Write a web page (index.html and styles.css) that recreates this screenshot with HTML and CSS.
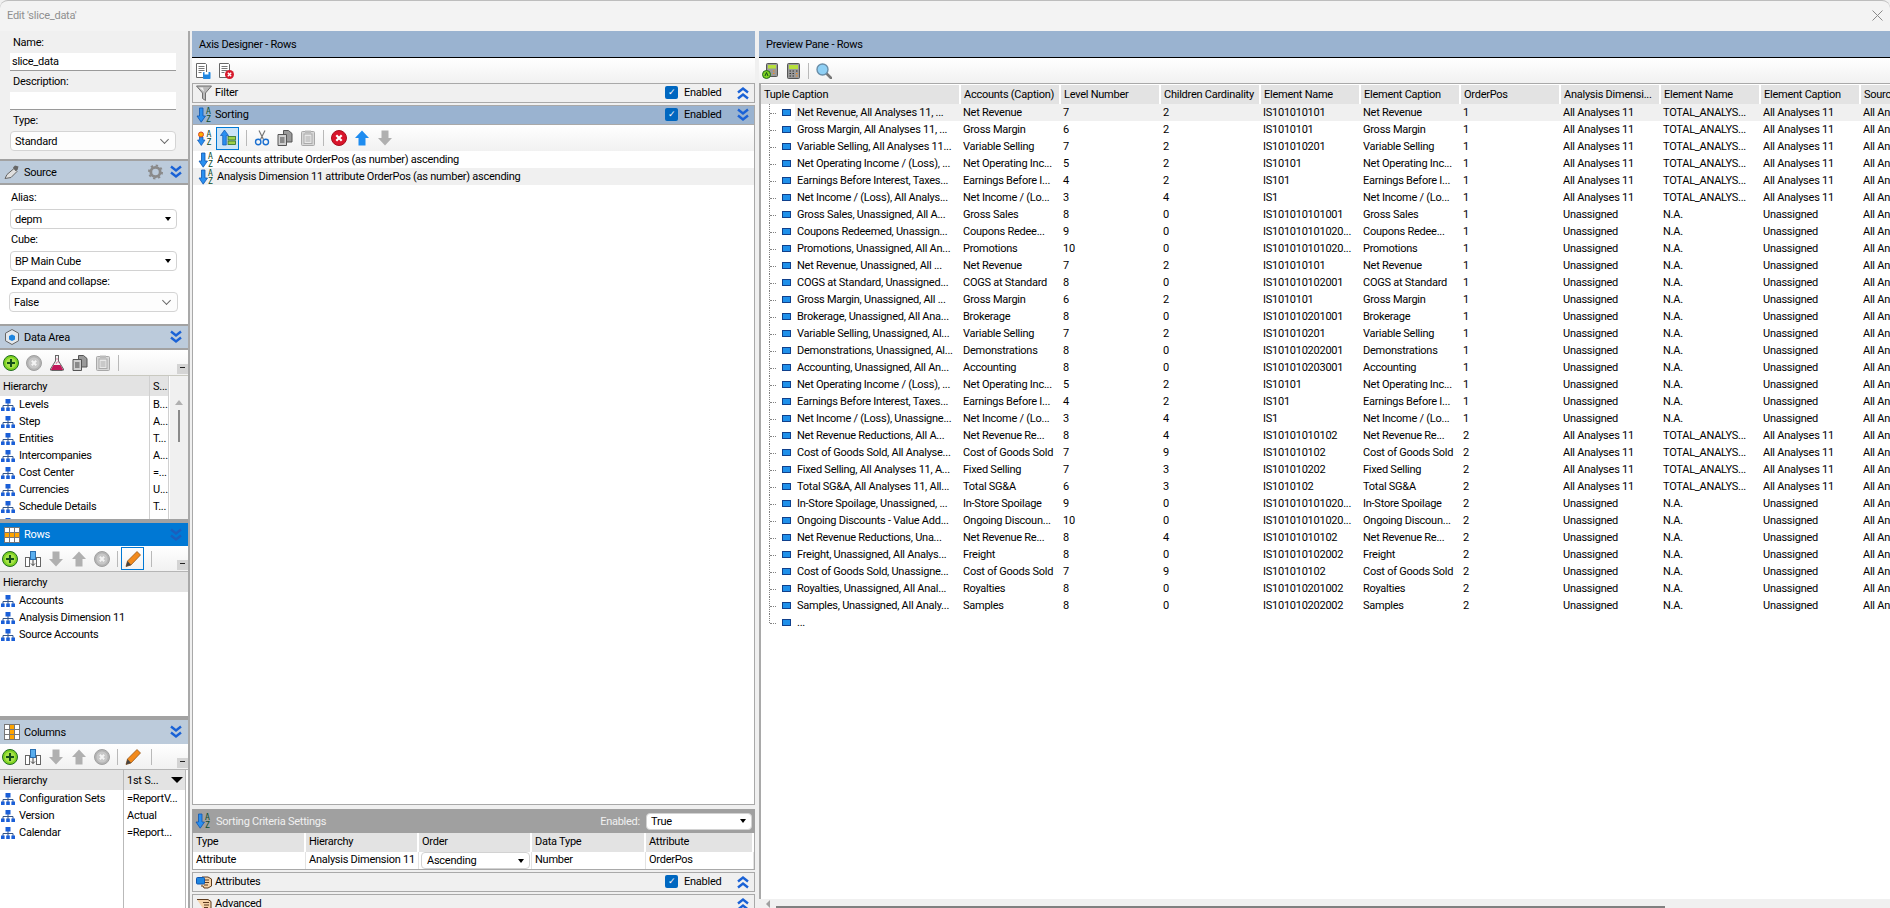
FILE: index.html
```html
<!DOCTYPE html>
<html lang="en">
<head>
  <meta charset="UTF-8" />
  <title>Edit 'slice_data'</title>
  <link rel="stylesheet" href="styles.css">
</head>
<body>
  <svg class="defs" width="0" height="0">
    <symbol id="i-hier" viewBox="0 0 14 12"><path d="M7 4v5M2 9V6.5h10V9" fill="none" stroke="#33558a"/><rect x="4.500" y="0" width="5" height="4.500" fill="#1a5fd8"/><rect x="0" y="8.500" width="3.600" height="3.500" fill="#1a5fd8"/><rect x="5.200" y="8.500" width="3.600" height="3.500" fill="#1a5fd8"/><rect x="10.400" y="8.500" width="3.600" height="3.500" fill="#1a5fd8"/></symbol>
    <symbol id="i-az" viewBox="0 0 16 16"><path d="M3.500 1h3.500v8h2.500l-4.300 6.200-4.200-6.200h2.500z" fill="#2a8ff0" stroke="#0f55b0" stroke-width=".8"/></symbol>
    <symbol id="i-funnel" viewBox="0 0 16 16"><path d="M.5 1h15l-6 7v7.500l-3-2V8z" fill="#b9b9b9" stroke="#6f6f6f"/><path d="M3 2.500h4l1 4z" fill="#efefef"/></symbol>
    <symbol id="i-save" viewBox="0 0 16 16"><path d="M1.500.5h9l1 1v13h-10z" fill="#fff" stroke="#666"/><path d="M3.500 3.500h6M3.500 5.500h6M3.500 7.500h6M3.500 9.500h3" stroke="#777"/><rect x="8" y="9" width="7.500" height="7" rx=".8" fill="#1f86e0"/><rect x="9.500" y="9" width="4" height="2.500" fill="#fff"/></symbol>
    <symbol id="i-docx" viewBox="0 0 16 16"><path d="M1.500.5h9l1 1v13h-10z" fill="#fff" stroke="#666"/><path d="M3.500 3.500h6M3.500 5.500h6M3.500 7.500h6M3.500 9.500h3" stroke="#777"/><circle cx="11.500" cy="11.500" r="4.500" fill="#d61a2c"/><path d="M9.800 9.800l3.400 3.400m0-3.400l-3.400 3.400" stroke="#fff" stroke-width="1.300"/></symbol>
    <symbol id="i-wiz" viewBox="0 0 16 16"><path d="M3.500 7h3.500v3h2l-3.700 5.500L1.500 10h2z" fill="#2a8ff0" stroke="#0f55b0" stroke-width=".7"/><circle cx="5" cy="4.500" r="2.500" fill="#ffb000" stroke="#d8452a"/></symbol>
    <symbol id="i-treeup" viewBox="0 0 16 16"><path d="M4.500 0l4 5.500h-2.200V15H2.700V5.500H.5z" fill="#2a8ff0" stroke="#0f55b0" stroke-width=".7"/><rect x="8" y="6.500" width="7.500" height="3.500" fill="#9ed04a" stroke="#2d6d2a" stroke-width=".8"/><rect x="8" y="11" width="7.500" height="3.500" fill="#9ed04a" stroke="#2d6d2a" stroke-width=".8"/></symbol>
    <symbol id="i-cut" viewBox="0 0 16 16"><path d="M5 .5l4.500 9M11 .5l-4.500 9" stroke="#777" stroke-width="1.200" fill="none"/><circle cx="4.200" cy="12" r="2.700" fill="none" stroke="#1a6fd0" stroke-width="1.400"/><circle cx="11.800" cy="12" r="2.700" fill="none" stroke="#1a6fd0" stroke-width="1.400"/></symbol>
    <symbol id="i-copy" viewBox="0 0 16 16"><path d="M6.500.5h5l3.500 3v8.500h-8.500z" fill="#9a9a9a" stroke="#555"/><path d="M1 4.500h8.500V15.500H1z" fill="#cfcfcf" stroke="#555"/><path d="M3 8h4.500M3 10h4.500M3 12h4.500" stroke="#444"/></symbol>
    <symbol id="i-paste" viewBox="0 0 16 16"><rect x="1.500" y="1.500" width="13" height="14" rx="1" fill="#d8d8d8" stroke="#a8a8a8"/><rect x="4" y="4" width="8" height="9.500" fill="#e8e8e8" stroke="#aaa"/><path d="M5.500 7h5M5.500 9h5M5.500 11h5" stroke="#aaa"/><rect x="5" y=".5" width="6" height="2.500" fill="#bbb"/></symbol>
    <symbol id="i-redx" viewBox="0 0 16 16"><circle cx="8" cy="8" r="7.500" fill="#d9142a" stroke="#a50e1e"/><path d="M5.300 5.300l5.400 5.400m0-5.400l-5.400 5.400" stroke="#fff" stroke-width="2.200"/></symbol>
    <symbol id="i-greyx" viewBox="0 0 16 16"><circle cx="8" cy="8" r="7.500" fill="#b4b4b4" stroke="#a0a0a0"/><circle cx="8" cy="8" r="5.500" fill="#c8c8c8"/><path d="M5.800 5.800l4.400 4.400m0-4.400l-4.400 4.400" stroke="#f4f4f4" stroke-width="2"/></symbol>
    <symbol id="i-plus" viewBox="0 0 16 16"><circle cx="8" cy="8" r="7.500" fill="#7ed321" stroke="#1f6b1f"/><circle cx="8" cy="8" r="5.200" fill="#a6e24a"/><path d="M8 4v8M4 8h8" stroke="#14501a" stroke-width="2"/></symbol>
    <symbol id="i-up" viewBox="0 0 16 16"><path d="M8 .5l7 7.500h-3.500v7.500h-7V8H1z" fill="currentColor"/></symbol>
    <symbol id="i-down" viewBox="0 0 16 16"><path d="M8 15.500l7-7.500h-3.500V.5h-7V8H1z" fill="currentColor"/></symbol>
    <symbol id="i-flask" viewBox="0 0 16 16"><path d="M6 .5h4M6.500 1v5L1.500 14q-.5 1.500 1 1.500h11q1.500 0 1-1.500L9.500 6V1" fill="#f3f3f3" stroke="#666"/><path d="M4.500 10h7l2.500 4.500q0 .5-.5.500h-11q-.5 0-.5-.5z" fill="#c2185b"/><path d="M7.500 4h1M8.500 7h1M6.800 8h1" stroke="#c2185b"/></symbol>
    <symbol id="i-col" viewBox="0 0 16 16"><rect x="5.500" y=".5" width="5" height="8" fill="#5aaeee" stroke="#2a6fb0"/><path d="M8 9v5.500M6 12.500l2 2 2-2" fill="none" stroke="#444"/><rect x=".5" y="6.500" width="4" height="9" fill="#fff" stroke="#666"/><rect x="11.500" y="6.500" width="4" height="9" fill="#fff" stroke="#666"/></symbol>
    <symbol id="i-pencil" viewBox="0 0 16 16"><path d="M12 .5l3.500 3.500L6 14l-5 1.500L2.500 10z" fill="#f28a1c" stroke="#8a4a10" stroke-width=".7"/><path d="M1 15.500L2.500 10 6 14z" fill="#444"/></symbol>
    <symbol id="i-gridr" viewBox="0 0 16 16"><rect x=".5" y=".5" width="15" height="15" fill="#fff" stroke="#777"/><rect x="1" y="5.500" width="14" height="5" fill="#ffa500"/><path d="M.5 5.500h15M.5 10.500h15M5.500.5v15M10.500.5v15" stroke="#777"/></symbol>
    <symbol id="i-gridc" viewBox="0 0 16 16"><rect x=".5" y=".5" width="15" height="15" fill="#fff" stroke="#777"/><rect x="5.500" y="1" width="5" height="14" fill="#ffa500"/><path d="M.5 5.500h15M.5 10.500h15M5.500.5v15M10.500.5v15" stroke="#777"/></symbol>
    <symbol id="i-calc" viewBox="0 0 16 16"><rect x="2.500" y=".5" width="12" height="15" rx="1" fill="#9a9a9a" stroke="#555"/><rect x="4" y="2" width="9" height="4" fill="#b6e03c"/><path d="M4.500 8h1.500M7.500 8H9M11 8h1.500M4.500 10.500h1.500M7.500 10.500H9M4.500 13h1.500M7.500 13H9" stroke="#333"/><path d="M11 10.500h1.500M11 13h1.500" stroke="#f28a1c"/></symbol>
    <symbol id="i-calca" viewBox="0 0 16 16"><rect x="4.500" y=".5" width="11" height="13" rx="1" fill="#9a9a9a" stroke="#555"/><rect x="6" y="2" width="8" height="3.500" fill="#b6e03c"/><path d="M11 8h1.500M11 10.500h1.500" stroke="#f28a1c"/><circle cx="4.500" cy="11.500" r="4" fill="#7ed321" stroke="#1f6b1f"/><path d="M3 13l1.500-3.500L6 13" fill="none" stroke="#14501a"/></symbol>
    <symbol id="i-mag" viewBox="0 0 16 16"><path d="M10 10l5 5" stroke="#777" stroke-width="2.600" stroke-linecap="round"/><circle cx="6.500" cy="6.500" r="5.500" fill="#8fd0f5" stroke="#6a8ea8" stroke-width="1.400"/></symbol>
    <symbol id="i-gear" viewBox="0 0 16 16"><circle cx="8" cy="8" r="5" fill="none" stroke="#8a8a8a" stroke-width="3"/><circle cx="8" cy="8" r="7" fill="none" stroke="#8a8a8a" stroke-width="2" stroke-dasharray="2.500 3"/></symbol>
    <symbol id="i-cube" viewBox="0 0 16 16"><path d="M8 .5l6.500 3.700v7.600L8 15.500l-6.500-3.700V4.200z" fill="#e4e8ec" stroke="#666"/><path d="M5 7l3-1.500L11 7v3.500L8 12l-3-1.500z" fill="#1f86e0"/></symbol>
    <symbol id="i-drop" viewBox="0 0 16 16"><path d="M1 14.500l2-4 7-6 3 3-6 6z" fill="#dfdfdf" stroke="#666"/><path d="M9 3.500l2-2 3.500 1-1 3.500-2 1z" fill="#666"/></symbol>
    <symbol id="i-hand" viewBox="0 0 16 16"><path d="M6 3h6l3.500 2v7L12 14H8l-1-2H5" fill="#f6d3a8" stroke="#5d3b1e"/><path d="M8 6h5M8 8.500h5M8 11h4" stroke="#5d3b1e"/><rect x=".5" y="3.500" width="8" height="6.500" rx="1" fill="#1f86e0" stroke="#0f55b0"/></symbol>
    <symbol id="i-hand2" viewBox="0 0 16 16"><path d="M1 3.500h11l3 2v6.500l-3 2.500H8l-1-2" fill="#f6d3a8" stroke="#5d3b1e"/><path d="M7 6.500h6M8 9h5M8 11.500h4" stroke="#5d3b1e"/></symbol>
    <symbol id="i-chevd" viewBox="0 0 14 14"><path d="M2 1.500l5 4 5-4M2 7.500l5 4 5-4" fill="none" stroke="currentColor" stroke-width="2.400"/></symbol>
    <symbol id="i-chevu" viewBox="0 0 14 14"><path d="M2 6.500l5-4 5 4M2 12.500l5-4 5 4" fill="none" stroke="currentColor" stroke-width="2.400"/></symbol>
    <symbol id="i-tuple" viewBox="0 0 9 7"><rect x=".5" y=".5" width="8" height="6" fill="#1f90ea" stroke="#10408c"/></symbol>
    <symbol id="i-close" viewBox="0 0 11 11"><path d="M.5.5l10 10m0-10l-10 10" stroke="#8a8a8a" fill="none"/></symbol>
  </svg>

  <div class="titlebar">
    <span class="title">Edit 'slice_data'</span>
    <svg class="close"><use href="#i-close"/></svg>
  </div>

  <div class="main">
    <aside class="left">
      <div class="form">
        <label class="fld-label">Name:</label>
        <div class="input">slice_data</div>
        <label class="fld-label">Description:</label>
        <div class="input"></div>
        <label class="fld-label">Type:</label>
        <div class="select flat">Standard<span class="vee"></span></div>
      </div>

      <div class="sec-head">
        <svg class="ic"><use href="#i-drop"/></svg><span class="sec-title">Source</span>
        <svg class="ic gear"><use href="#i-gear"/></svg>
        <svg class="chev"><use href="#i-chevd"/></svg>
      </div>
      <div class="source">
        <label class="src-label">Alias:</label>
        <div class="select">depm<span class="tri"></span></div>
        <label class="src-label">Cube:</label>
        <div class="select">BP Main Cube<span class="tri"></span></div>
        <label class="src-label">Expand and collapse:</label>
        <div class="select flat wide">False<span class="vee"></span></div>
      </div>

      <div class="sec-head">
        <svg class="ic"><use href="#i-cube"/></svg><span class="sec-title">Data Area</span>
        <svg class="chev"><use href="#i-chevd"/></svg>
      </div>
      <div class="toolbar tb-side">
        <svg class="ic"><use href="#i-plus"/></svg>
        <svg class="ic"><use href="#i-greyx"/></svg>
        <svg class="ic"><use href="#i-flask"/></svg>
        <svg class="ic"><use href="#i-copy"/></svg>
        <svg class="ic"><use href="#i-paste"/></svg>
        <span class="sep"></span>
        <span class="grip"></span>
      </div>
      <div class="hier-table data-area">
        <div class="hier-cols">
          <div class="hier-head"><span class="hc-name">Hierarchy</span><span class="hc-sub">S...</span></div>
          <div class="hier-row"><span class="hc-name"><svg class="hi"><use href="#i-hier"/></svg>Levels</span><span class="hc-sub">B...</span></div>
          <div class="hier-row"><span class="hc-name"><svg class="hi"><use href="#i-hier"/></svg>Step</span><span class="hc-sub">A...</span></div>
          <div class="hier-row"><span class="hc-name"><svg class="hi"><use href="#i-hier"/></svg>Entities</span><span class="hc-sub">T...</span></div>
          <div class="hier-row"><span class="hc-name"><svg class="hi"><use href="#i-hier"/></svg>Intercompanies</span><span class="hc-sub">A...</span></div>
          <div class="hier-row"><span class="hc-name"><svg class="hi"><use href="#i-hier"/></svg>Cost Center</span><span class="hc-sub">=...</span></div>
          <div class="hier-row"><span class="hc-name"><svg class="hi"><use href="#i-hier"/></svg>Currencies</span><span class="hc-sub">U...</span></div>
          <div class="hier-row"><span class="hc-name"><svg class="hi"><use href="#i-hier"/></svg>Schedule Details</span><span class="hc-sub">T...</span></div>
          <div class="hier-row"><span class="hc-name"><svg class="hi"><use href="#i-hier"/></svg></span><span class="hc-sub"></span></div>
        </div>
        <div class="vscroll"><span class="arrow-up"></span><span class="thumb"></span></div>
      </div>

      <div class="sec-head thick active">
        <svg class="ic"><use href="#i-gridr"/></svg><span class="sec-title">Rows</span>
        <svg class="chev"><use href="#i-chevd"/></svg>
      </div>
      <div class="toolbar tb-axis">
        <svg class="ic"><use href="#i-plus"/></svg>
        <svg class="ic"><use href="#i-col"/></svg>
        <svg class="ic grey"><use href="#i-down"/></svg>
        <svg class="ic grey"><use href="#i-up"/></svg>
        <svg class="ic"><use href="#i-greyx"/></svg>
        <span class="sep"></span>
        <span class="btn-on"><svg class="ic"><use href="#i-pencil"/></svg></span>
        <span class="sep"></span>
        <span class="grip"></span>
      </div>
      <div class="hier-table rows-list">
        <div class="hier-cols">
          <div class="hier-head"><span class="hc-full">Hierarchy</span></div>
          <div class="hier-row"><span class="hc-full"><svg class="hi"><use href="#i-hier"/></svg>Accounts</span></div>
          <div class="hier-row"><span class="hc-full"><svg class="hi"><use href="#i-hier"/></svg>Analysis Dimension 11</span></div>
          <div class="hier-row"><span class="hc-full"><svg class="hi"><use href="#i-hier"/></svg>Source Accounts</span></div>
        </div>
      </div>

      <div class="sec-head thick">
        <svg class="ic"><use href="#i-gridc"/></svg><span class="sec-title">Columns</span>
        <svg class="chev"><use href="#i-chevd"/></svg>
      </div>
      <div class="toolbar tb-axis">
        <svg class="ic"><use href="#i-plus"/></svg>
        <svg class="ic"><use href="#i-col"/></svg>
        <svg class="ic grey"><use href="#i-down"/></svg>
        <svg class="ic grey"><use href="#i-up"/></svg>
        <svg class="ic"><use href="#i-greyx"/></svg>
        <span class="sep"></span>
        <span class="btn-off"><svg class="ic"><use href="#i-pencil"/></svg></span>
        <span class="sep"></span>
        <span class="grip"></span>
      </div>
      <div class="hier-table cols-list">
        <div class="hier-cols">
          <div class="hier-head"><span class="cl-name">Hierarchy</span><span class="cl-sub">1st S...<span class="tri head-tri"></span></span></div>
          <div class="hier-row"><span class="cl-name"><svg class="hi"><use href="#i-hier"/></svg>Configuration Sets</span><span class="cl-sub">=ReportV...</span></div>
          <div class="hier-row"><span class="cl-name"><svg class="hi"><use href="#i-hier"/></svg>Version</span><span class="cl-sub">Actual</span></div>
          <div class="hier-row"><span class="cl-name"><svg class="hi"><use href="#i-hier"/></svg>Calendar</span><span class="cl-sub">=Report...</span></div>
          <div class="cols-rest"><span class="cl-name"></span><span class="cl-sub"></span></div>
        </div>
      </div>
    </aside>

    <section class="center">
      <div class="pane-head">Axis Designer - Rows</div>
      <div class="toolbar tb-top">
        <svg class="ic"><use href="#i-save"/></svg>
        <svg class="ic"><use href="#i-docx"/></svg>
      </div>
      <div class="bar">
        <svg class="ic"><use href="#i-funnel"/></svg><span class="bar-title">Filter</span>
        <span class="check">&#x2713;</span><span class="enabled">Enabled</span>
        <svg class="chev"><use href="#i-chevu"/></svg>
      </div>
      <div class="bar on">
        <svg class="ic" viewBox="0 0 16 16"><use href="#i-az"/><text x="10" y="7" class="az">A</text><text x="10" y="15" class="az">Z</text></svg><span class="bar-title">Sorting</span>
        <span class="check">&#x2713;</span><span class="enabled">Enabled</span>
        <svg class="chev"><use href="#i-chevd"/></svg>
      </div>
      <div class="sort-box">
        <div class="toolbar tb-sort">
          <svg class="ic" viewBox="0 0 16 16"><use href="#i-wiz"/><text x="10.500" y="7" class="az">A</text><text x="10.500" y="15" class="az">Z</text></svg>
          <span class="btn-sel"><svg class="ic"><use href="#i-treeup"/></svg></span>
          <span class="sep"></span>
          <svg class="ic"><use href="#i-cut"/></svg>
          <svg class="ic"><use href="#i-copy"/></svg>
          <svg class="ic"><use href="#i-paste"/></svg>
          <span class="sep"></span>
          <svg class="ic"><use href="#i-redx"/></svg>
          <svg class="ic blue"><use href="#i-up"/></svg>
          <svg class="ic grey"><use href="#i-down"/></svg>
        </div>
        <div class="sort-row"><svg class="ic" viewBox="0 0 16 16"><use href="#i-az"/><text x="10" y="7" class="az">A</text><text x="10" y="15" class="az">Z</text></svg>Accounts attribute OrderPos (as number) ascending</div>
        <div class="sort-row alt"><svg class="ic" viewBox="0 0 16 16"><use href="#i-az"/><text x="10" y="7" class="az">A</text><text x="10" y="15" class="az">Z</text></svg>Analysis Dimension 11 attribute OrderPos (as number) ascending</div>
      </div>
      <div class="crit-head">
        <svg class="ic" viewBox="0 0 16 16"><use href="#i-az"/><text x="10" y="7" class="az">A</text><text x="10" y="15" class="az">Z</text></svg><span class="crit-title">Sorting Criteria Settings</span>
        <span class="crit-en">Enabled:</span>
        <div class="select crit-sel">True<span class="tri"></span></div>
      </div>
      <div class="crit-grid">
        <span class="ch ch1">Type</span><span class="ch ch2">Hierarchy</span><span class="ch ch3">Order</span><span class="ch ch4">Data Type</span><span class="ch ch5">Attribute</span>
        <span class="cd">Attribute</span><span class="cd">Analysis Dimension 11</span><span class="cd cd-sel"><span class="select order-sel">Ascending<span class="tri"></span></span></span><span class="cd">Number</span><span class="cd">OrderPos</span>
      </div>
      <div class="bar">
        <svg class="ic"><use href="#i-hand"/></svg><span class="bar-title">Attributes</span>
        <span class="check">&#x2713;</span><span class="enabled">Enabled</span>
        <svg class="chev"><use href="#i-chevu"/></svg>
      </div>
      <div class="bar last">
        <svg class="ic"><use href="#i-hand2"/></svg><span class="bar-title">Advanced</span>
        <svg class="chev"><use href="#i-chevu"/></svg>
      </div>
    </section>

    <section class="right">
      <div class="pane-head">Preview Pane - Rows</div>
      <div class="toolbar tb-preview">
        <svg class="ic"><use href="#i-calca"/></svg>
        <svg class="ic"><use href="#i-calc"/></svg>
        <span class="sep"></span>
        <svg class="ic"><use href="#i-mag"/></svg>
      </div>
      <div class="grid-wrap">
        <table class="grid">
          <colgroup>
            <col class="c-first"><col class="c-n"><col class="c-n"><col class="c-n"><col class="c-n"><col class="c-n"><col class="c-n"><col class="c-n"><col class="c-n"><col class="c-n"><col class="c-n">
          </colgroup>
          <thead>
            <tr><th>Tuple Caption</th><th>Accounts (Caption)</th><th>Level Number</th><th>Children Cardinality</th><th>Element Name</th><th>Element Caption</th><th>OrderPos</th><th>Analysis Dimensi...</th><th>Element Name</th><th>Element Caption</th><th>Source</th></tr>
          </thead>
          <tbody>
            <tr class="sel"><td class="tree"><span class="twig"></span><svg class="tup"><use href="#i-tuple"/></svg><span class="cap">Net Revenue, All Analyses 11, ...</span></td><td>Net Revenue</td><td>7</td><td>2</td><td>IS101010101</td><td>Net Revenue</td><td>1</td><td>All Analyses 11</td><td>TOTAL_ANALYS...</td><td>All Analyses 11</td><td>All Analyses 11</td></tr>
            <tr><td class="tree"><span class="twig"></span><svg class="tup"><use href="#i-tuple"/></svg><span class="cap">Gross Margin, All Analyses 11, ...</span></td><td>Gross Margin</td><td>6</td><td>2</td><td>IS1010101</td><td>Gross Margin</td><td>1</td><td>All Analyses 11</td><td>TOTAL_ANALYS...</td><td>All Analyses 11</td><td>All Analyses 11</td></tr>
            <tr><td class="tree"><span class="twig"></span><svg class="tup"><use href="#i-tuple"/></svg><span class="cap">Variable Selling, All Analyses 11...</span></td><td>Variable Selling</td><td>7</td><td>2</td><td>IS101010201</td><td>Variable Selling</td><td>1</td><td>All Analyses 11</td><td>TOTAL_ANALYS...</td><td>All Analyses 11</td><td>All Analyses 11</td></tr>
            <tr><td class="tree"><span class="twig"></span><svg class="tup"><use href="#i-tuple"/></svg><span class="cap">Net Operating Income / (Loss), ...</span></td><td>Net Operating Inc...</td><td>5</td><td>2</td><td>IS10101</td><td>Net Operating Inc...</td><td>1</td><td>All Analyses 11</td><td>TOTAL_ANALYS...</td><td>All Analyses 11</td><td>All Analyses 11</td></tr>
            <tr><td class="tree"><span class="twig"></span><svg class="tup"><use href="#i-tuple"/></svg><span class="cap">Earnings Before Interest, Taxes...</span></td><td>Earnings Before I...</td><td>4</td><td>2</td><td>IS101</td><td>Earnings Before I...</td><td>1</td><td>All Analyses 11</td><td>TOTAL_ANALYS...</td><td>All Analyses 11</td><td>All Analyses 11</td></tr>
            <tr><td class="tree"><span class="twig"></span><svg class="tup"><use href="#i-tuple"/></svg><span class="cap">Net Income / (Loss), All Analys...</span></td><td>Net Income / (Lo...</td><td>3</td><td>4</td><td>IS1</td><td>Net Income / (Lo...</td><td>1</td><td>All Analyses 11</td><td>TOTAL_ANALYS...</td><td>All Analyses 11</td><td>All Analyses 11</td></tr>
            <tr><td class="tree"><span class="twig"></span><svg class="tup"><use href="#i-tuple"/></svg><span class="cap">Gross Sales, Unassigned, All A...</span></td><td>Gross Sales</td><td>8</td><td>0</td><td>IS101010101001</td><td>Gross Sales</td><td>1</td><td>Unassigned</td><td>N.A.</td><td>Unassigned</td><td>All Analyses 11</td></tr>
            <tr><td class="tree"><span class="twig"></span><svg class="tup"><use href="#i-tuple"/></svg><span class="cap">Coupons Redeemed, Unassign...</span></td><td>Coupons Redee...</td><td>9</td><td>0</td><td>IS101010101020...</td><td>Coupons Redee...</td><td>1</td><td>Unassigned</td><td>N.A.</td><td>Unassigned</td><td>All Analyses 11</td></tr>
            <tr><td class="tree"><span class="twig"></span><svg class="tup"><use href="#i-tuple"/></svg><span class="cap">Promotions, Unassigned, All An...</span></td><td>Promotions</td><td>10</td><td>0</td><td>IS101010101020...</td><td>Promotions</td><td>1</td><td>Unassigned</td><td>N.A.</td><td>Unassigned</td><td>All Analyses 11</td></tr>
            <tr><td class="tree"><span class="twig"></span><svg class="tup"><use href="#i-tuple"/></svg><span class="cap">Net Revenue, Unassigned, All ...</span></td><td>Net Revenue</td><td>7</td><td>2</td><td>IS101010101</td><td>Net Revenue</td><td>1</td><td>Unassigned</td><td>N.A.</td><td>Unassigned</td><td>All Analyses 11</td></tr>
            <tr><td class="tree"><span class="twig"></span><svg class="tup"><use href="#i-tuple"/></svg><span class="cap">COGS at Standard, Unassigned...</span></td><td>COGS at Standard</td><td>8</td><td>0</td><td>IS101010102001</td><td>COGS at Standard</td><td>1</td><td>Unassigned</td><td>N.A.</td><td>Unassigned</td><td>All Analyses 11</td></tr>
            <tr><td class="tree"><span class="twig"></span><svg class="tup"><use href="#i-tuple"/></svg><span class="cap">Gross Margin, Unassigned, All ...</span></td><td>Gross Margin</td><td>6</td><td>2</td><td>IS1010101</td><td>Gross Margin</td><td>1</td><td>Unassigned</td><td>N.A.</td><td>Unassigned</td><td>All Analyses 11</td></tr>
            <tr><td class="tree"><span class="twig"></span><svg class="tup"><use href="#i-tuple"/></svg><span class="cap">Brokerage, Unassigned, All Ana...</span></td><td>Brokerage</td><td>8</td><td>0</td><td>IS101010201001</td><td>Brokerage</td><td>1</td><td>Unassigned</td><td>N.A.</td><td>Unassigned</td><td>All Analyses 11</td></tr>
            <tr><td class="tree"><span class="twig"></span><svg class="tup"><use href="#i-tuple"/></svg><span class="cap">Variable Selling, Unassigned, Al...</span></td><td>Variable Selling</td><td>7</td><td>2</td><td>IS101010201</td><td>Variable Selling</td><td>1</td><td>Unassigned</td><td>N.A.</td><td>Unassigned</td><td>All Analyses 11</td></tr>
            <tr><td class="tree"><span class="twig"></span><svg class="tup"><use href="#i-tuple"/></svg><span class="cap">Demonstrations, Unassigned, Al...</span></td><td>Demonstrations</td><td>8</td><td>0</td><td>IS101010202001</td><td>Demonstrations</td><td>1</td><td>Unassigned</td><td>N.A.</td><td>Unassigned</td><td>All Analyses 11</td></tr>
            <tr><td class="tree"><span class="twig"></span><svg class="tup"><use href="#i-tuple"/></svg><span class="cap">Accounting, Unassigned, All An...</span></td><td>Accounting</td><td>8</td><td>0</td><td>IS101010203001</td><td>Accounting</td><td>1</td><td>Unassigned</td><td>N.A.</td><td>Unassigned</td><td>All Analyses 11</td></tr>
            <tr><td class="tree"><span class="twig"></span><svg class="tup"><use href="#i-tuple"/></svg><span class="cap">Net Operating Income / (Loss), ...</span></td><td>Net Operating Inc...</td><td>5</td><td>2</td><td>IS10101</td><td>Net Operating Inc...</td><td>1</td><td>Unassigned</td><td>N.A.</td><td>Unassigned</td><td>All Analyses 11</td></tr>
            <tr><td class="tree"><span class="twig"></span><svg class="tup"><use href="#i-tuple"/></svg><span class="cap">Earnings Before Interest, Taxes...</span></td><td>Earnings Before I...</td><td>4</td><td>2</td><td>IS101</td><td>Earnings Before I...</td><td>1</td><td>Unassigned</td><td>N.A.</td><td>Unassigned</td><td>All Analyses 11</td></tr>
            <tr><td class="tree"><span class="twig"></span><svg class="tup"><use href="#i-tuple"/></svg><span class="cap">Net Income / (Loss), Unassigne...</span></td><td>Net Income / (Lo...</td><td>3</td><td>4</td><td>IS1</td><td>Net Income / (Lo...</td><td>1</td><td>Unassigned</td><td>N.A.</td><td>Unassigned</td><td>All Analyses 11</td></tr>
            <tr><td class="tree"><span class="twig"></span><svg class="tup"><use href="#i-tuple"/></svg><span class="cap">Net Revenue Reductions, All A...</span></td><td>Net Revenue Re...</td><td>8</td><td>4</td><td>IS10101010102</td><td>Net Revenue Re...</td><td>2</td><td>All Analyses 11</td><td>TOTAL_ANALYS...</td><td>All Analyses 11</td><td>All Analyses 11</td></tr>
            <tr><td class="tree"><span class="twig"></span><svg class="tup"><use href="#i-tuple"/></svg><span class="cap">Cost of Goods Sold, All Analyse...</span></td><td>Cost of Goods Sold</td><td>7</td><td>9</td><td>IS101010102</td><td>Cost of Goods Sold</td><td>2</td><td>All Analyses 11</td><td>TOTAL_ANALYS...</td><td>All Analyses 11</td><td>All Analyses 11</td></tr>
            <tr><td class="tree"><span class="twig"></span><svg class="tup"><use href="#i-tuple"/></svg><span class="cap">Fixed Selling, All Analyses 11, A...</span></td><td>Fixed Selling</td><td>7</td><td>3</td><td>IS101010202</td><td>Fixed Selling</td><td>2</td><td>All Analyses 11</td><td>TOTAL_ANALYS...</td><td>All Analyses 11</td><td>All Analyses 11</td></tr>
            <tr><td class="tree"><span class="twig"></span><svg class="tup"><use href="#i-tuple"/></svg><span class="cap">Total SG&amp;A, All Analyses 11, All...</span></td><td>Total SG&amp;A</td><td>6</td><td>3</td><td>IS1010102</td><td>Total SG&amp;A</td><td>2</td><td>All Analyses 11</td><td>TOTAL_ANALYS...</td><td>All Analyses 11</td><td>All Analyses 11</td></tr>
            <tr><td class="tree"><span class="twig"></span><svg class="tup"><use href="#i-tuple"/></svg><span class="cap">In-Store Spoilage, Unassigned, ...</span></td><td>In-Store Spoilage</td><td>9</td><td>0</td><td>IS101010101020...</td><td>In-Store Spoilage</td><td>2</td><td>Unassigned</td><td>N.A.</td><td>Unassigned</td><td>All Analyses 11</td></tr>
            <tr><td class="tree"><span class="twig"></span><svg class="tup"><use href="#i-tuple"/></svg><span class="cap">Ongoing Discounts - Value Add...</span></td><td>Ongoing Discoun...</td><td>10</td><td>0</td><td>IS101010101020...</td><td>Ongoing Discoun...</td><td>2</td><td>Unassigned</td><td>N.A.</td><td>Unassigned</td><td>All Analyses 11</td></tr>
            <tr><td class="tree"><span class="twig"></span><svg class="tup"><use href="#i-tuple"/></svg><span class="cap">Net Revenue Reductions, Una...</span></td><td>Net Revenue Re...</td><td>8</td><td>4</td><td>IS10101010102</td><td>Net Revenue Re...</td><td>2</td><td>Unassigned</td><td>N.A.</td><td>Unassigned</td><td>All Analyses 11</td></tr>
            <tr><td class="tree"><span class="twig"></span><svg class="tup"><use href="#i-tuple"/></svg><span class="cap">Freight, Unassigned, All Analys...</span></td><td>Freight</td><td>8</td><td>0</td><td>IS101010102002</td><td>Freight</td><td>2</td><td>Unassigned</td><td>N.A.</td><td>Unassigned</td><td>All Analyses 11</td></tr>
            <tr><td class="tree"><span class="twig"></span><svg class="tup"><use href="#i-tuple"/></svg><span class="cap">Cost of Goods Sold, Unassigne...</span></td><td>Cost of Goods Sold</td><td>7</td><td>9</td><td>IS101010102</td><td>Cost of Goods Sold</td><td>2</td><td>Unassigned</td><td>N.A.</td><td>Unassigned</td><td>All Analyses 11</td></tr>
            <tr><td class="tree"><span class="twig"></span><svg class="tup"><use href="#i-tuple"/></svg><span class="cap">Royalties, Unassigned, All Anal...</span></td><td>Royalties</td><td>8</td><td>0</td><td>IS101010201002</td><td>Royalties</td><td>2</td><td>Unassigned</td><td>N.A.</td><td>Unassigned</td><td>All Analyses 11</td></tr>
            <tr><td class="tree"><span class="twig"></span><svg class="tup"><use href="#i-tuple"/></svg><span class="cap">Samples, Unassigned, All Analy...</span></td><td>Samples</td><td>8</td><td>0</td><td>IS101010202002</td><td>Samples</td><td>2</td><td>Unassigned</td><td>N.A.</td><td>Unassigned</td><td>All Analyses 11</td></tr>
            <tr class="end"><td class="tree"><span class="twig"></span><svg class="tup"><use href="#i-tuple"/></svg><span class="cap">...</span></td><td colspan="10"></td></tr>
          </tbody>
        </table>
      </div>
      <div class="hscroll"><span class="arrow-left"></span><span class="hthumb"></span></div>
    </section>
  </div>
</body>
</html>
```

FILE: styles.css
```css
* {
  box-sizing: border-box;
}
html, body {
  margin: 0;
  height: 908px;
  overflow: hidden;
}
body {
  font-family: Roboto, "Noto Sans", sans-serif;
  font-size: 11px;
  letter-spacing: -.25px;
  color: #000;
  background: #f0f0f0;
  display: flex;
  flex-direction: column;
}
.defs {
  position: absolute;
}
.az {
  font-family: "DejaVu Sans Mono", monospace;
  font-size: 8px;
  letter-spacing: 0;
  fill: #0c4a2a;
}

/* title bar */
.titlebar {
  height: 31px;
  flex: none;
  display: flex;
  align-items: center;
  justify-content: space-between;
  padding: 0 7px 2px 7px;
  border-top: 1px solid #bdbdbd;
  background: #f3f3f3;
  border-radius: 8px 8px 0 0;
}
.title {
  color: #8f8f8f;
}
.close {
  width: 11px;
  height: 11px;
}
.main {
  flex: 1;
  display: flex;
  min-height: 0;
}

/* shared bits */
.ic {
  width: 16px;
  height: 16px;
  flex: none;
}
.ic.grey {
  color: #b0b0b0;
}
.ic.blue {
  color: #1e8cf0;
}
.chev {
  width: 14px;
  height: 14px;
  flex: none;
  color: #1a62d6;
}
.toolbar {
  display: flex;
  align-items: center;
  flex: none;
  background: linear-gradient(#ffffff, #f1f1f1);
}
.sep {
  width: 1px;
  height: 16px;
  background: #b9b9b9;
  flex: none;
}
.grip {
  margin-left: auto;
  width: 11px;
  height: 10px;
  align-self: flex-end;
  margin-bottom: 1px;
  background: linear-gradient(#222, #222) center 3px / 5px 1px no-repeat, #d4d4d4;
}
.select {
  display: flex;
  align-items: center;
  justify-content: space-between;
  height: 20px;
  padding: 0 5px 0 4px;
  background: #fff;
  border: 1px solid #d2d2d2;
  border-radius: 4px;
}
.tri {
  width: 0;
  height: 0;
  border: 3.500px solid transparent;
  border-top: 4px solid #000;
  border-bottom: 0;
}
.vee {
  width: 7px;
  height: 7px;
  margin: -3px 2px 0 0;
  border-right: 1px solid #666;
  border-bottom: 1px solid #666;
  transform: rotate(45deg) scale(.9);
}

/* left column */
.left {
  width: 190px;
  flex: none;
  display: flex;
  flex-direction: column;
  border-right: 2px solid #a9a9a9;
  background: #fff;
}
.form {
  height: 128px;
  flex: none;
  background: #f0f0f0;
  padding: 4px 12px 0 10px;
}
.fld-label {
  display: block;
  height: 18px;
  line-height: 15px;
  padding-left: 3px;
}
.input {
  height: 18px;
  margin-bottom: 3px;
  padding-left: 2px;
  line-height: 17px;
  background: #fff;
  border-bottom: 1px solid #9a9a9a;
}
.select.flat {
  border-color: #d4d4d4;
  background: #fdfdfd;
}
.sec-head {
  height: 26px;
  flex: none;
  display: flex;
  align-items: center;
  gap: 4px;
  padding: 0 5px 0 4px;
  background: #bccbdb;
  border-top: 2px solid #a2a2a2;
  border-bottom: 2px solid #a2a2a2;
}
.sec-head.thick {
  height: 28px;
  border-top-width: 4px;
  border-bottom: 0;
}
.sec-head .chev {
  margin-left: auto;
}
.sec-head .gear {
  margin-left: auto;
  margin-right: 2px;
  width: 15px;
}
.sec-head .gear + .chev {
  margin-left: 0;
}
.sec-head.active {
  height: 27px;
  background: #0078d4;
  color: #fff;
}
.sec-head.active .chev {
  color: #1b5fbd;
}
.source {
  height: 139px;
  flex: none;
  padding: 3px 11px 0 10px;
  background: #fff;
}
.src-label {
  display: block;
  height: 21px;
  line-height: 19px;
  padding-left: 1px;
}
.source .select {
  margin-bottom: 1px;
}
.select.wide {
  margin: -1px -1px 0;
}
.tb-side {
  height: 26px;
  gap: 7px;
  padding-left: 3px;
  border-bottom: 1px solid #c9c9c0;
}
.tb-axis {
  height: 26px;
  gap: 7px;
  padding-left: 2px;
  border-bottom: 1px solid #b5b5b5;
}
.tb-axis .sep {
  margin: 0 -4px 0 0;
}
.tb-axis .sep:last-of-type {
  margin-left: -4px;
}
.btn-on, .btn-off {
  width: 23px;
  height: 23px;
  display: flex;
  align-items: center;
  justify-content: center;
  border: 1px solid transparent;
}
.btn-on {
  border-color: #0078d4;
}
.hier-table {
  display: flex;
  flex: none;
  overflow: hidden;
  background: #fff;
}
.hier-cols {
  flex: 1;
  min-width: 0;
}
.data-area {
  height: 143px;
}
.rows-list {
  height: 144px;
}
.cols-list {
  flex: 1;
  min-height: 0;
}
.cols-list .hier-cols {
  height: 100%;
  display: flex;
  flex-direction: column;
}
.cols-rest {
  flex: 1;
  display: flex;
}
.hier-head {
  height: 20px;
  flex: none;
  display: flex;
  align-items: center;
}
.hier-row {
  height: 17px;
  flex: none;
  display: flex;
  align-items: center;
}
.hc-name, .hc-sub, .hc-full, .cl-name, .cl-sub {
  height: 100%;
  display: flex;
  align-items: center;
  white-space: nowrap;
}
.hier-head span {
  background: #e3e3e3;
}
.hc-name {
  width: 150px;
  padding-left: 1px;
  border-right: 1px solid #d0d0d0;
}
.hier-head .hc-name, .hier-head .hc-full, .hier-head .cl-name {
  padding-left: 3px;
}
.hc-sub {
  width: 19px;
  padding-left: 3px;
  border-right: 1px solid #d0d0d0;
}
.hc-full {
  width: 100%;
  padding-left: 1px;
}
.cl-name {
  width: 124px;
  padding-left: 1px;
  border-right: 1px solid #b9b9b9;
}
.cl-sub {
  width: 62px;
  padding-left: 3px;
  border-right: 1px solid #b9b9b9;
}
.head-tri {
  margin-left: auto;
  margin-right: 2px;
  border-width: 6px 6px 0;
  border-top-color: #000;
  background: none !important;
}
.hi {
  width: 14px;
  height: 12px;
  flex: none;
  margin-right: 4px;
}
.vscroll {
  width: 18px;
  flex: none;
  background: #f0f0f0;
  display: flex;
  flex-direction: column;
  align-items: center;
  padding-top: 24px;
  gap: 5px;
}
.arrow-up {
  border: 4.500px solid transparent;
  border-bottom: 5px solid #b0b0b0;
  border-top: 0;
}
.thumb {
  width: 2px;
  height: 32px;
  background: #8a8a8a;
}

/* center pane */
.center {
  width: 563px;
  margin-left: 2px;
  flex: none;
  display: flex;
  flex-direction: column;
  overflow: hidden;
}
.pane-head {
  height: 27px;
  flex: none;
  padding: 0 7px;
  display: flex;
  align-items: center;
  background: #9ab3d0;
  border-bottom: 1px solid #000;
}
.tb-top {
  height: 25px;
  gap: 7px;
  padding-left: 3px;
}
.bar {
  height: 20px;
  flex: none;
  margin-bottom: 2px;
  display: flex;
  align-items: center;
  padding: 0 4px 1px 3px;
  background: #f0f0f0;
  border: 1px solid #a9a9a9;
}
.bar.on {
  background: #9ab3d0;
  margin-bottom: 0;
}
.bar.last {
  height: 20px;
}
.bar-title {
  margin-left: 3px;
}
.check {
  margin-left: auto;
  width: 13px;
  height: 13px;
  border-radius: 2px;
  background: #0067c0;
  color: #fff;
  font-size: 9px;
  line-height: 13px;
  text-align: center;
}
.enabled {
  width: 44px;
  margin: 0 8px 0 6px;
}
.bar.last .chev {
  margin-left: auto;
}
.sort-box {
  height: 680px;
  flex: none;
  background: #fff;
  border: 1px solid #a9a9a9;
  border-top: 0;
}
.tb-sort {
  height: 26px;
  gap: 7px;
  padding-left: 3px;
}
.btn-sel {
  width: 23px;
  height: 23px;
  display: flex;
  align-items: center;
  justify-content: center;
  background: #cce4f7;
  border: 1px solid #0078d4;
  margin-left: -3px;
}
.sort-row {
  height: 17px;
  display: flex;
  align-items: center;
  gap: 3px;
  padding-left: 5px;
}
.sort-row.alt {
  background: #f0f0f0;
}
.crit-head {
  height: 24px;
  flex: none;
  margin-top: 4px;
  display: flex;
  align-items: center;
  padding: 0 3px;
  background: #a0a0a0;
}
.crit-title {
  margin-left: 5px;
  color: #f0f0f0;
}
.crit-en {
  margin-left: auto;
  margin-right: 6px;
  color: #f0f0f0;
}
.crit-sel {
  width: 106px;
  height: 17px;
}
.crit-grid {
  flex: none;
  display: grid;
  grid-template-columns: 113px 113px 113px 114px 108px;
  grid-template-rows: 19px 17px;
  background: #fff;
  border: 1px solid #a9a9a9;
  border-top: 0;
  margin-bottom: 2px;
}
.ch {
  background: #e3e3e3;
  padding-left: 3px;
  line-height: 18px;
  border-right: 2px solid #fff;
}
.cd {
  padding-left: 3px;
  line-height: 16px;
  white-space: nowrap;
  border-right: 1px solid #e3e3e3;
}
.cd-sel {
  padding: 0 1px 0 2px;
}
.order-sel {
  height: 17px;
  padding-left: 5px;
}

/* right pane */
.right {
  flex: 1;
  min-width: 0;
  margin-left: 4px;
  display: flex;
  flex-direction: column;
}
.tb-preview {
  height: 25px;
  gap: 7px;
  padding-left: 3px;
}
.grid-wrap {
  flex: 1;
  min-height: 0;
  overflow: hidden;
  background: #fff;
  border-top: 1px solid #a9a9a9;
  border-left: 2px solid #a9a9a9;
  padding-top: 1px;
}
.grid {
  table-layout: fixed;
  width: 1199px;
  border-collapse: collapse;
}
.c-first {
  width: 199px;
}
.c-n {
  width: 100px;
}
.grid th {
  height: 19px;
  padding: 0 0 0 3px;
  font-weight: normal;
  text-align: left;
  white-space: nowrap;
  overflow: hidden;
  background: #e3e3e3;
  border-right: 2px solid #fff;
}
.grid td {
  height: 17px;
  padding: 0 0 0 3px;
  white-space: nowrap;
  overflow: hidden;
}
.grid .sel td {
  background: #f0f0f0;
}
.grid .sel td.tree {
  background: none;
}
.grid td.tree {
  display: flex;
  align-items: center;
  padding-left: 8px;
}
.twig {
  width: 7px;
  height: 17px;
  flex: none;
  border-left: 1px dotted #808080;
}
.twig::before {
  content: "";
  display: block;
  height: 9px;
  border-bottom: 1px dotted #808080;
}
.end .twig {
  height: 9px;
  align-self: flex-start;
}
.tup {
  width: 9px;
  height: 7px;
  flex: none;
  margin: 0 0 0 6px;
}
.cap {
  height: 17px;
  line-height: 17px;
  margin-left: 4px;
  padding-left: 2px;
  flex: 1;
}
.sel .cap {
  background: #f0f0f0;
}
.hscroll {
  height: 9px;
  flex: none;
  margin-left: -4px;
  background: #f0f0f0;
  display: flex;
  align-items: flex-end;
  padding-left: 11px;
}
.arrow-left {
  border: 4px solid transparent;
  border-right: 4px solid #a0a0a0;
  border-left: 0;
}
.hthumb {
  width: 889px;
  height: 2px;
  margin-left: 6px;
  background: #808080;
}
```
